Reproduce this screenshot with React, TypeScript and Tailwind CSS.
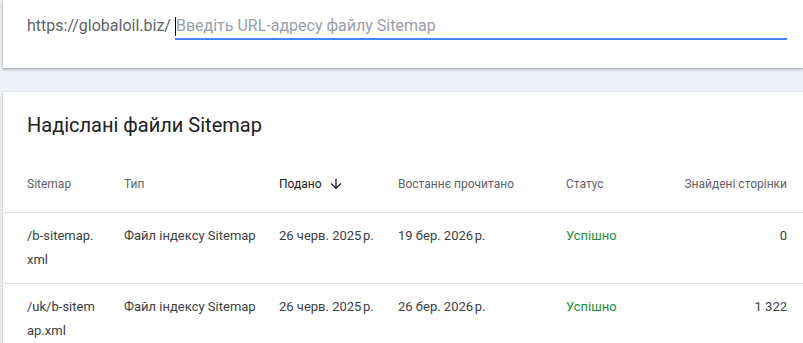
import React from "react";

const rows = [
  { sitemap: "/b-sitemap.xml", type: "Файл індексу Sitemap", submitted: "26 черв. 2025\u202Fр.", read: "19 бер. 2026\u202Fр.", status: "Успішно", pages: "0" },
  { sitemap: "/uk/b-sitemap.xml", type: "Файл індексу Sitemap", submitted: "26 черв. 2025\u202Fр.", read: "26 бер. 2026\u202Fр.", status: "Успішно", pages: "1 322" },
];

export default function App() {
  return (
    <div className="w-[803px] h-[343px] overflow-hidden bg-[#eef1f6] font-['Roboto',sans-serif]">
      {/* top card */}
      <div className="ml-[3px] w-[800px] h-[68px] bg-white shadow-[0_1px_2px_rgba(60,64,67,0.35),0_1px_3px_1px_rgba(60,64,67,0.15)] pl-[24px] pr-[16px] pt-[14px]">
        <div className="flex items-start">
          <div className="text-[16px] leading-[24px] text-[#5f6368] pr-[4px]">https://globaloil.biz/</div>
          <div className="flex-1 flex items-center h-[24px] border-b-2 border-[#4285f4] box-content">
            <span className="w-[1px] h-[19px] bg-black"></span>
            <span className="text-[16px] leading-[24px] text-[#9aa0a6]">Введіть URL-адресу файлу Sitemap</span>
          </div>
        </div>
      </div>

      {/* second card */}
      <div className="ml-[3px] mt-[24px] w-[800px] bg-white shadow-[0_1px_2px_rgba(60,64,67,0.2),0_1px_3px_1px_rgba(60,64,67,0.1)]">
        <div className="pl-[24px] pt-[19px] text-[20px] leading-[28px] text-[#202124]">Надіслані файли Sitemap</div>
        <div className="mt-[17px]">
          <div className="grid grid-cols-[97px_155px_119px_168px_1fr_auto] pl-[24px] pr-[16px] h-[57px] items-center border-b border-[#e0e0e0] text-[12px] text-[#5f6368]">
            <div>Sitemap</div>
            <div>Тип</div>
            <div className="flex items-center text-[#202124]">
              Подано
              <svg className="ml-[6px]" width="16" height="16" viewBox="0 0 24 24" fill="#202124">
                <path d="M20 12l-1.41-1.41L13 16.17V4h-2v12.17l-5.58-5.59L4 12l8 8 8-8z" />
              </svg>
            </div>
            <div>Востаннє прочитано</div>
            <div>Статус</div>
            <div className="text-right">Знайдені сторінки</div>
          </div>
          {rows.map((r, i) => (
            <div key={i} className="grid grid-cols-[97px_155px_119px_168px_1fr_auto] pl-[24px] pr-[16px] pt-[11px] pb-[12px] border-b border-[#e0e0e0] text-[13px] leading-[23.5px] text-[#3c4043]">
              <div className="w-[70px] break-all">{r.sitemap}</div>
              <div>{r.type}</div>
              <div>{r.submitted}</div>
              <div>{r.read}</div>
              <div className="text-[#1e8e3e]">{r.status}</div>
              <div className="text-right">{r.pages}</div>
            </div>
          ))}
        </div>
      </div>
    </div>
  );
}
